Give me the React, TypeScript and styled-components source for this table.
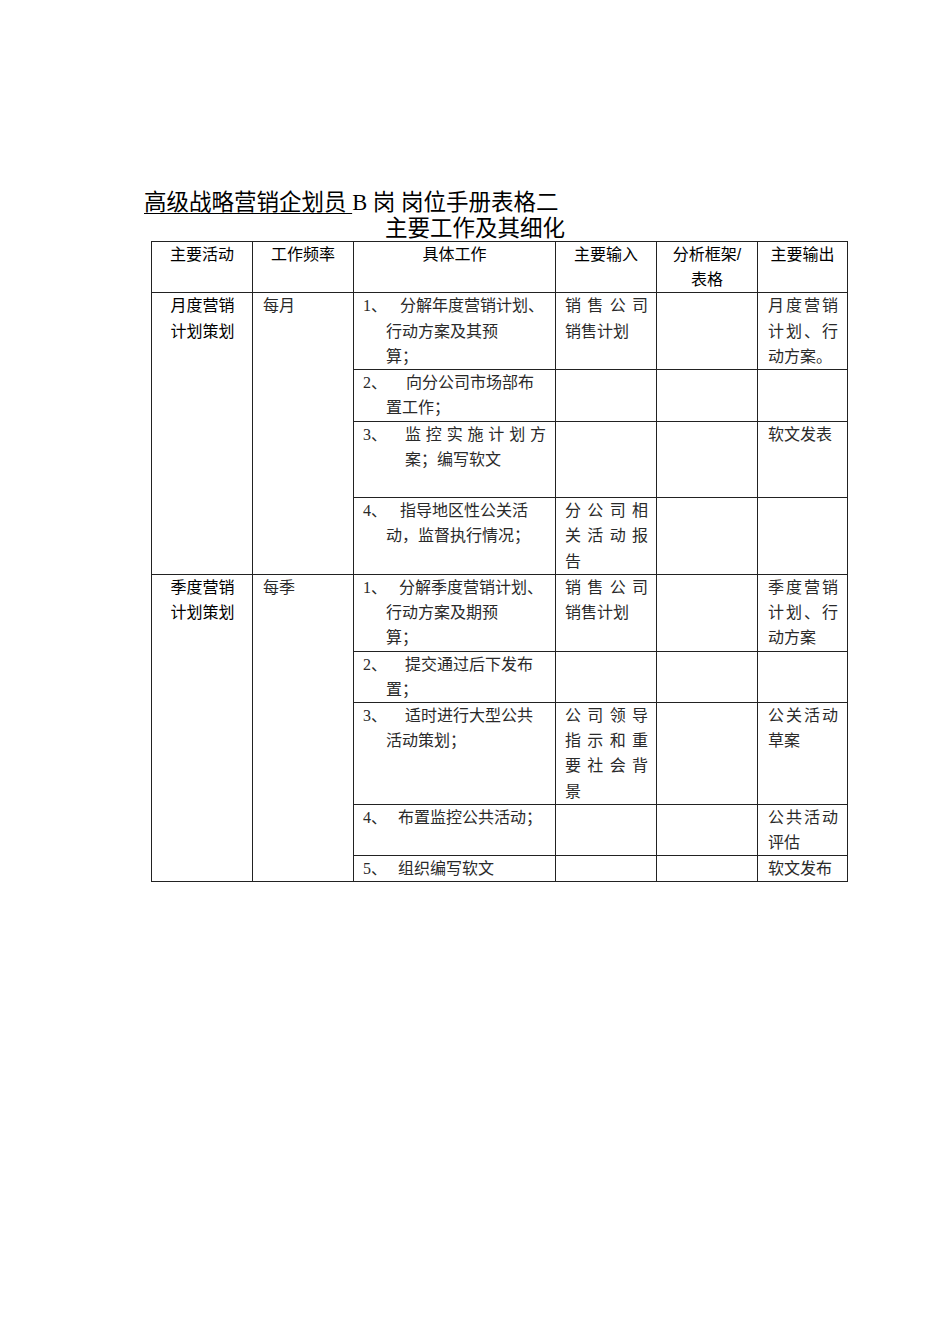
import React from 'react'
import styled, { createGlobalStyle } from 'styled-components'

const SERIF = `"Liberation Serif", "Noto Sans CJK SC", serif`
const SANS = `"Liberation Sans", "Noto Sans CJK SC", sans-serif`

const GlobalStyle = createGlobalStyle`
    html, body {
        margin: 0;
        padding: 0;
        background: #fff;
    }
`

type Task = {
    n: string
    gap: number
    lines: string[]
    indent: number
    spread?: boolean
    input?: string[]
    output?: string[]
}

type Group = {
    act: string[]
    freq: string
    tasks: Task[]
}

const groups: Group[] = [
    {
        act: ['月度营销', '计划策划'],
        freq: '每月',
        tasks: [
            { n: '1、', gap: 37, lines: ['分解年度营销计划、', '行动方案及其预', '算；'], indent: 23, input: ['销售公司', '销售计划'], output: ['月度营销', '计划、行', '动方案。'] },
            { n: '2、', gap: 43, lines: ['向分公司市场部布', '置工作；'], indent: 23 },
            { n: '3、', gap: 42, lines: ['监控实施计划方', '案；编写软文', ''], indent: 42, spread: true, output: ['软文发表'] },
            { n: '4、', gap: 37, lines: ['指导地区性公关活', '动，监督执行情况；'], indent: 23, input: ['分公司相', '关活动报', '告'] },
        ],
    },
    {
        act: ['季度营销', '计划策划'],
        freq: '每季',
        tasks: [
            { n: '1、', gap: 36, lines: ['分解季度营销计划、', '行动方案及期预', '算；'], indent: 23, input: ['销售公司', '销售计划'], output: ['季度营销', '计划、行', '动方案'] },
            { n: '2、', gap: 42, lines: ['提交通过后下发布', '置；'], indent: 23 },
            { n: '3、', gap: 42, lines: ['适时进行大型公共', '活动策划；'], indent: 23, input: ['公司领导', '指示和重', '要社会背', '景'], output: ['公关活动', '草案'] },
            { n: '4、', gap: 35, lines: ['布置监控公共活动；'], indent: 23, output: ['公共活动', '评估'] },
            { n: '5、', gap: 35, lines: ['组织编写软文'], indent: 23, output: ['软文发布'] },
        ],
    },
]

const Justified: React.FC<{ lines?: string[] }> = ({ lines = [] }) => (
    <>
        {lines.map((l, i) => (
            <Line key={i} $spread={i < lines.length - 1}>{l}</Line>
        ))}
    </>
)

const TaskCell: React.FC<{ task: Task }> = ({ task }) => {
    const [first, ...rest] = task.lines
    return (
        <Td $padLeft={9}>
            <FirstLine>
                <Num $w={task.gap}>{task.n}</Num>
                <TaskText $spread={task.spread}>{first}</TaskText>
            </FirstLine>
            {rest.map((l, i) => (
                <Cont key={i} $indent={task.indent}>{l || '\u00a0'}</Cont>
            ))}
        </Td>
    )
}

const App: React.FC = () => {
    return (
        <Page>
            <GlobalStyle />
            <Title>
                <TitleMain>
                    <Under>高级战略营销企划员 </Under>B 岗 岗位手册表格二
                </TitleMain>
                <TitleSub>主要工作及其细化</TitleSub>
            </Title>
            <Table>
                <colgroup>
                    <col style={{ width: 101 }} />
                    <col style={{ width: 101 }} />
                    <col style={{ width: 202 }} />
                    <col style={{ width: 101 }} />
                    <col style={{ width: 101 }} />
                    <col style={{ width: 90 }} />
                </colgroup>
                <thead>
                    <tr>
                        <Th>主要活动</Th>
                        <Th>工作频率</Th>
                        <Th>具体工作</Th>
                        <Th>主要输入</Th>
                        <Th>分析框架/<br />表格</Th>
                        <Th>主要输出</Th>
                    </tr>
                </thead>
                <tbody>
                    {groups.map((g, gi) =>
                        g.tasks.map((t, ti) => (
                            <tr key={`${gi}-${ti}`}>
                                {ti === 0 && (
                                    <>
                                        <Td rowSpan={g.tasks.length} $sans $center>
                                            {g.act[0]}<br />{g.act[1]}
                                        </Td>
                                        <Td rowSpan={g.tasks.length}>{g.freq}</Td>
                                    </>
                                )}
                                <TaskCell task={t} />
                                <Td $padLeft={9} $padRight={8}><Justified lines={t.input} /></Td>
                                <Td />
                                <Td><Justified lines={t.output} /></Td>
                            </tr>
                        ))
                    )}
                </tbody>
            </Table>
        </Page>
    )
}

const Page = styled.div`
    width: 950px;
    min-height: 1344px;
    box-sizing: border-box;
    padding-top: 190px;
    background: #fff;
    color: #111;
`
const Title = styled.div`
    font-family: ${SERIF};
    font-size: 22.5px;
    color: #000;
`
const TitleMain = styled.div`
    line-height: 26px;
    padding-left: 144px;
    white-space: nowrap;
`
const Under = styled.span`
    text-decoration: underline;
    text-underline-offset: 3px;
    text-decoration-thickness: 1px;
`
const TitleSub = styled.div`
    line-height: 25px;
    text-align: center;
`
const Table = styled.table`
    margin-left: 151px;
    width: 697px;
    table-layout: fixed;
    border-collapse: collapse;
    font-size: 16px;
    line-height: 25.22px;
`
const Th = styled.th`
    font-family: ${SANS};
    font-weight: normal;
    color: #000;
    text-align: center;
    vertical-align: top;
    padding: 0 6px;
    border: 1px solid #222;
    white-space: nowrap;
`
const Td = styled.td<{ $sans?: boolean; $center?: boolean; $padLeft?: number; $padRight?: number }>`
    font-family: ${p => (p.$sans ? SANS : SERIF)};
    color: ${p => (p.$sans ? '#000' : '#2a2a2a')};
    text-align: ${p => (p.$center ? 'center' : 'left')};
    vertical-align: top;
    padding: 0 ${p => p.$padRight ?? 9}px 0 ${p => p.$padLeft ?? 10}px;
    border: 1px solid #222;
`
const Line = styled.div<{ $spread?: boolean }>`
    white-space: nowrap;
    text-align: justify;
    text-align-last: ${p => (p.$spread ? 'justify' : 'auto')};
`
const FirstLine = styled.div`
    display: flex;
    white-space: nowrap;
`
const Num = styled.span<{ $w: number }>`
    flex: 0 0 ${p => p.$w}px;
`
const TaskText = styled.span<{ $spread?: boolean }>`
    flex: 1;
    text-align: justify;
    text-align-last: ${p => (p.$spread ? 'justify' : 'auto')};
`
const Cont = styled.div<{ $indent: number }>`
    padding-left: ${p => p.$indent}px;
    white-space: nowrap;
`

export default App
